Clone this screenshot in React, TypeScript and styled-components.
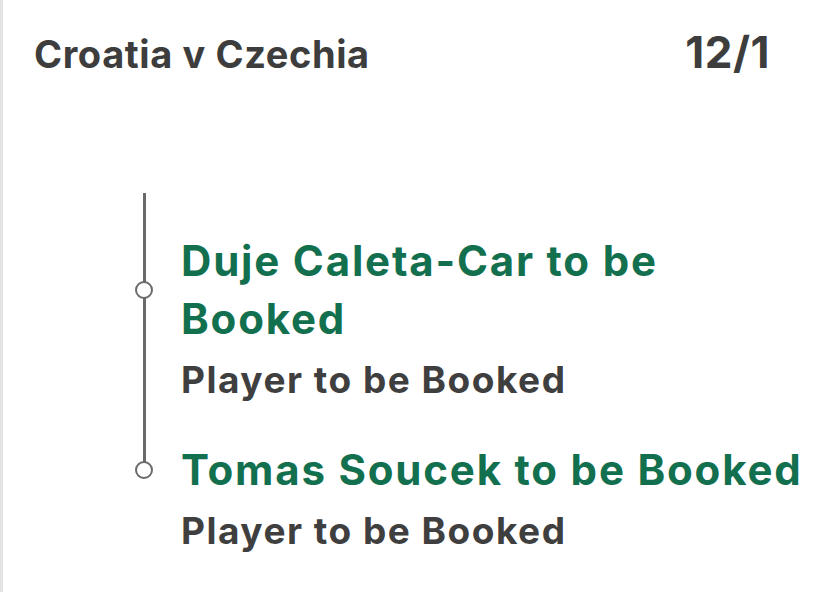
import React from "react";
import styled, { createGlobalStyle } from "styled-components";

const Global = createGlobalStyle`
  html, body { margin: 0; padding: 0; background: #ffffff; }
  * { box-sizing: border-box; }
`;

const Page = styled.div`
  width: 828px;
  min-height: 592px;
  border-left: 3px solid #e3e3e3;
  background: #ffffff;
  padding-top: 28px;
`;

const Header = styled.div`
  display: flex;
  justify-content: space-between;
  align-items: baseline;
  padding: 0 58px 0 31px;
`;

const MatchName = styled.div`
  font-family: Inter, "Noto Sans", sans-serif;
  font-weight: 700;
  font-size: 38px;
  letter-spacing: 0.6px;
  line-height: 48px;
  color: #3d3d3d;
`;

const Odds = styled.div`
  font-family: Inter, "Noto Sans", sans-serif;
  font-weight: 700;
  font-size: 44px;
  letter-spacing: 0.5px;
  line-height: 48px;
  color: #3d3d3d;
`;

const Timeline = styled.div`
  position: relative;
  margin: 115px 0 0 130px;
  padding-top: 39px;
  display: flex;
  flex-direction: column;
  gap: 32px;
  &::before {
    content: "";
    position: absolute;
    left: 10px;
    top: 0;
    width: 3px;
    height: 270px;
    background: #6a6a6a;
  }
`;

const Item = styled.div`
  display: flex;
  flex-direction: column;
`;

const TitleRow = styled.div`
  display: flex;
  align-items: center;
  gap: 28px;
`;

const Marker = styled.span`
  position: relative;
  flex: 0 0 18px;
  width: 18px;
  height: 18px;
  margin-left: 2px;
  border-radius: 50%;
  border: 2.5px solid #6a6a6a;
  background: #ffffff;
`;

const Title = styled.div`
  font-family: Inter, "Noto Sans", sans-serif;
  font-weight: 700;
  font-size: 42px;
  letter-spacing: 1.8px;
  line-height: 58px;
  color: #13704f;
  max-width: 640px;
`;

const Subtitle = styled.div`
  font-family: Inter, "Noto Sans", sans-serif;
  font-weight: 700;
  font-size: 37px;
  letter-spacing: 1.5px;
  line-height: 58px;
  margin-top: 3px;
  color: #3f3f3f;
  padding-left: 48px;
`;

const selections = [
  { title: "Duje Caleta-Car to be Booked", market: "Player to be Booked" },
  { title: "Tomas Soucek to be Booked", market: "Player to be Booked" },
];

export default function App() {
  return (
    <>
      <Global />
      <Page>
        <Header>
          <MatchName>Croatia v Czechia</MatchName>
          <Odds>12/1</Odds>
        </Header>
        <Timeline>
          {selections.map((s) => (
            <Item key={s.title}>
              <TitleRow>
                <Marker />
                <Title>{s.title}</Title>
              </TitleRow>
              <Subtitle>{s.market}</Subtitle>
            </Item>
          ))}
        </Timeline>
      </Page>
    </>
  );
}
